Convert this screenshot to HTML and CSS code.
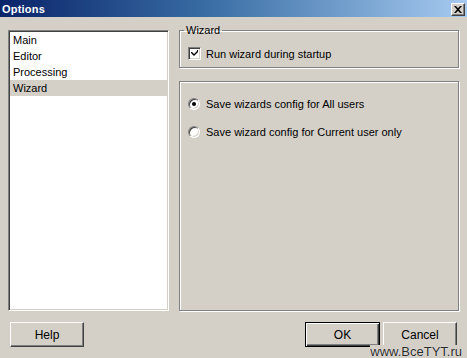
FILE: index.html
```html
<!DOCTYPE html>
<html>
<head>
<meta charset="utf-8">
<link rel="stylesheet" href="styles.css">
</head>
<body>
<div class="dialog">
  <div class="titlebar">
    <span class="title">Options</span>
    <span class="close"><svg width="8" height="7" viewBox="0 0 8 7"><path d="M0 0h2l2 2.2L6 0h2L5 3.5 8 7H6L4 4.8 2 7H0l3-3.5z" fill="#000"/></svg></span>
  </div>
  <div class="main">
    <div class="list">
      <div class="item">Main</div>
      <div class="item">Editor</div>
      <div class="item">Processing</div>
      <div class="item selected">Wizard</div>
    </div>
    <div class="right">
      <fieldset class="group">
        <legend>Wizard</legend>
        <div class="row">
          <span class="checkbox"><svg width="7" height="7" viewBox="0 0 7 7"><path d="M0 2h1l2 2 3-3V0h1v2L3 6 0 3z" fill="#000"/></svg></span>
          <span class="label">Run wizard during startup</span>
        </div>
      </fieldset>
      <div class="panel">
        <div class="row">
          <span class="radio checked"><span class="dot"></span></span>
          <span class="label">Save wizards config for All users</span>
        </div>
        <div class="row second">
          <span class="radio"></span>
          <span class="label">Save wizard config for Current user only</span>
        </div>
      </div>
    </div>
  </div>
  <div class="buttons">
    <span class="btn">Help</span>
    <span class="spacer"></span>
    <span class="btn default">OK</span>
    <span class="btn">Cancel</span>
  </div>
  <div class="watermark">www.BceTYT.ru</div>
</div>
</body>
</html>
```
FILE: styles.css
```css
html, body {
  margin: 0;
  padding: 0;
  background: #d4d0c8;
}
.dialog {
  position: relative;
  width: 467px;
  height: 358px;
  overflow: hidden;
  background: #d4d0c8;
  font-family: "Liberation Sans", Arial, sans-serif;
  font-size: 11px;
  color: #000;
}
.titlebar {
  height: 17px;
  display: flex;
  align-items: center;
  padding: 0 2px 0 2px;
  background: linear-gradient(to right, #0a246a 0%, #3a6ea5 45%, #a6caf0 100%);
}
.title {
  flex: 1;
  color: #fff;
  font-weight: bold;
  font-size: 11px;
  letter-spacing: 0.2px;
}
.close {
  width: 14px;
  height: 13px;
  box-sizing: border-box;
  background: #d4d0c8;
  border-top: 1px solid #fff;
  border-left: 1px solid #fff;
  border-right: 1px solid #404040;
  border-bottom: 1px solid #404040;
  box-shadow: inset -1px -1px 0 #808080;
  display: flex;
  align-items: center;
  justify-content: center;
  margin-top: 1px;
}
.main {
  display: flex;
  align-items: flex-start;
  gap: 10px;
  padding: 7px 8px 0 8px;
}
.list {
  width: 161px;
  height: 281px;
  margin-top: 6px;
  box-sizing: border-box;
  background: #fff;
  border-top: 1px solid #808080;
  border-left: 1px solid #808080;
  border-right: 1px solid #fff;
  border-bottom: 1px solid #fff;
  box-shadow: inset 1px 1px 0 #404040, inset -1px -1px 0 #d4d0c8;
  padding: 1px 1px 0 1px;
}
.item {
  height: 16px;
  line-height: 16px;
  padding-left: 3px;
}
.item.selected {
  background: #d4d0c8;
}
.right {
  flex: 1;
  display: flex;
  flex-direction: column;
}
.group {
  margin: 0;
  padding: 0 0 7px 8px;
  border: 1px solid #808080;
  box-shadow: inset 1px 1px 0 #fff, 1px 1px 0 #fff;
  min-width: 0;
}
.group legend {
  padding: 0 2px;
  margin-left: -4px;
  line-height: 13px;
}
.row {
  display: flex;
  align-items: center;
  height: 13px;
}
.group .row {
  margin-top: 10px;
}
.checkbox {
  width: 13px;
  height: 13px;
  box-sizing: border-box;
  background: #fff;
  border-top: 1px solid #808080;
  border-left: 1px solid #808080;
  border-right: 1px solid #fff;
  border-bottom: 1px solid #fff;
  box-shadow: inset 1px 1px 0 #404040, inset -1px -1px 0 #d4d0c8;
  display: flex;
  align-items: center;
  justify-content: center;
  margin-right: 5px;
}
.panel {
  margin-top: 13px;
  height: 230px;
  box-sizing: border-box;
  border: 1px solid #808080;
  box-shadow: inset 1px 1px 0 #fff, 1px 1px 0 #fff;
  padding: 15px 0 0 8px;
}
.panel .row.second {
  margin-top: 15px;
}
.radio {
  width: 12px;
  height: 12px;
  box-sizing: border-box;
  border-radius: 50%;
  background: #fff;
  border: 1px solid;
  border-color: #808080 #fff #fff #808080;
  box-shadow: inset 1px 1px 0 #404040, inset -1px -1px 0 #d4d0c8;
  display: flex;
  align-items: center;
  justify-content: center;
  margin-right: 6px;
}
.dot {
  width: 4px;
  height: 4px;
  border-radius: 50%;
  background: #000;
}
.buttons {
  display: flex;
  align-items: center;
  gap: 3px;
  padding: 11px 10px 0 10px;
}
.spacer {
  flex: 1;
}
.btn {
  width: 74px;
  height: 25px;
  box-sizing: border-box;
  display: flex;
  align-items: center;
  justify-content: center;
  background: #d4d0c8;
  border-top: 1px solid #fff;
  border-left: 1px solid #fff;
  border-right: 1px solid #404040;
  border-bottom: 1px solid #404040;
  box-shadow: inset -1px -1px 0 #808080;
  font-size: 12px;
}
.btn.default {
  width: 75px;
  border: 1px solid #000;
  box-shadow: inset 1px 1px 0 #fff, inset -1px -1px 0 #404040, inset -2px -2px 0 #808080;
}
.watermark {
  position: absolute;
  right: 5px;
  bottom: 0;
  font-family: "Liberation Sans", Arial, sans-serif;
  font-size: 13px;
  color: #2a2a2a;
  text-shadow: 0 0 1px #fff;
  background: #d4d0c8;
  line-height: 13px;
}
```
